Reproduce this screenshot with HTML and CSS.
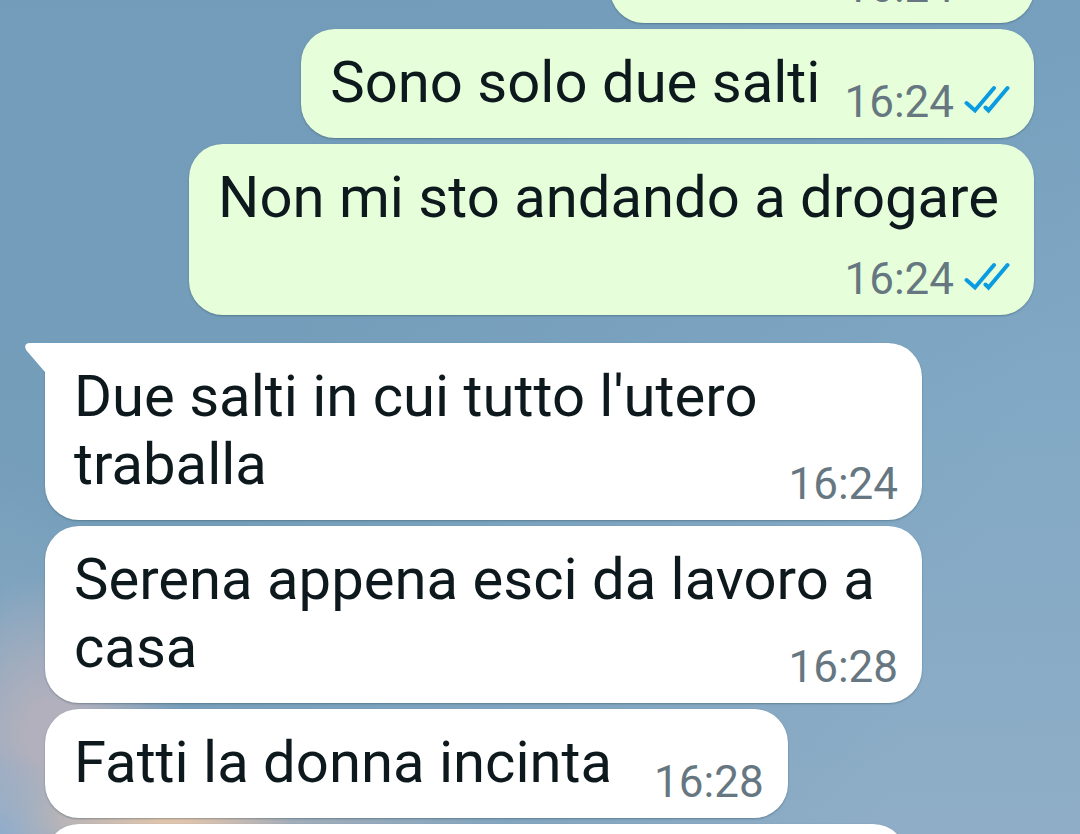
FILE: index.html
```html
<!DOCTYPE html>
<html lang="it">
<head>
<meta charset="utf-8">
<meta name="viewport" content="width=device-width, initial-scale=1">
<title>Chat</title>
<link rel="stylesheet" href="styles.css">
</head>
<body>
<svg class="defs" aria-hidden="true">
  <symbol id="ticks" viewBox="0 0 46 34">
    <path d="M2.500 18 11 25.500 30 3M21.500 22.500 24.500 25.500 43.500 3" fill="none" stroke="currentColor" stroke-width="4" stroke-linecap="round" stroke-linejoin="miter"/>
  </symbol>
</svg>
<main class="chat">
  <article class="bubble sent inline clipped-top">
    <div class="meta"><time>16:24</time></div>
  </article>
  <article class="bubble sent inline">
    <p class="text">Sono solo due salti</p>
    <div class="meta"><time>16:24</time><svg class="ticks" role="img" aria-label="Letto"><use href="#ticks"/></svg></div>
  </article>
  <article class="bubble sent stacked">
    <p class="text">Non mi sto andando a drogare</p>
    <div class="meta"><time>16:24</time><svg class="ticks" role="img" aria-label="Letto"><use href="#ticks"/></svg></div>
  </article>
  <article class="bubble received wrapped first">
    <svg class="tail" viewBox="0 0 22 34" aria-hidden="true"><path d="M22 0H5C0 0-1 4 1.500 7.500L20 29V34H22Z" fill="#fff"/></svg>
    <p class="text">Due salti in cui tutto l'utero traballa</p>
    <div class="meta"><time>16:24</time></div>
  </article>
  <article class="bubble received wrapped">
    <p class="text">Serena appena esci da lavoro a casa</p>
    <div class="meta"><time>16:28</time></div>
  </article>
  <article class="bubble received inline">
    <p class="text">Fatti la donna incinta</p>
    <div class="meta"><time>16:28</time></div>
  </article>
  <article class="bubble received clipped-bottom"></article>
</main>
</body>
</html>
```
FILE: styles.css
```css
* {
  box-sizing: border-box;
}

body {
  margin: 0;
  font-family: Roboto, "Liberation Sans", sans-serif;
  color: #0e191e;
}

.defs {
  position: absolute;
  width: 0;
  height: 0;
}

.chat {
  display: flex;
  flex-direction: column;
  gap: 6px;
  height: 100vh;
  padding: 0 46px 0 45px;
  overflow: hidden;
  background:
    radial-gradient(ellipse 120px 30px at 16% 98%, #e8c8ac 0%, rgba(232, 200, 172, 0) 100%),
    radial-gradient(ellipse 60px 90px at 0% 100%, rgba(140, 172, 205, 0.9) 0%, rgba(140, 172, 205, 0) 100%),
    radial-gradient(ellipse 400px 50px at 10% 98%, #b5b3b8 20%, rgba(181, 179, 184, 0) 100%),
    radial-gradient(ellipse 130px 160px at 5% 88%, #b2b0bc 20%, rgba(178, 176, 188, 0) 100%),
    radial-gradient(ellipse 160px 380px at 0% 100%, rgba(148, 176, 202, 0.9) 0%, rgba(148, 176, 202, 0) 100%),
    linear-gradient(110deg, rgba(113, 155, 184, 0.8) 30%, rgba(113, 155, 184, 0) 85%),
    linear-gradient(180deg, #76a0be 0%, #82a9c5 50%, #8fadc6 100%);
}

.bubble {
  flex: none;
  max-width: calc(100% - 112px);
  padding: 19px 24px 10px 29px;
  border-radius: 34px;
  box-shadow: 0 1px 2px rgba(40, 70, 80, 0.4);
  font-size: 58px;
  line-height: 68px;
}

.sent {
  align-self: flex-end;
  background: #e6ffda;
}

.received {
  align-self: flex-start;
  background: #fff;
}

.text {
  margin: 0 0 12px;
}

.meta {
  display: flex;
  align-items: center;
  gap: 10px;
  font-size: 44px;
  line-height: 52px;
  color: #667781;
}

.inline {
  display: flex;
  align-items: flex-end;
  gap: 24px;
}

.received.inline {
  gap: 42px;
}

.stacked {
  display: flex;
  flex-direction: column;
  align-items: flex-end;
  gap: 10px;
}

.stacked .text {
  padding-right: 11px;
}

.wrapped {
  display: flow-root;
}

.wrapped .text {
  display: inline;
}

.wrapped .meta {
  float: right;
  margin-top: 28px;
}

.first {
  position: relative;
  margin-top: 22px;
  border-top-left-radius: 0;
}

.tail {
  position: absolute;
  top: 0;
  left: -20px;
  width: 22px;
  height: 34px;
}

.ticks {
  width: 46px;
  height: 34px;
  color: #0a9be0;
}

.clipped-top {
  width: 424px;
  height: 109px;
  margin-top: -86px;
  padding-right: 80px;
  justify-content: flex-end;
}

.clipped-bottom {
  width: 862px;
  height: 109px;
}
```
